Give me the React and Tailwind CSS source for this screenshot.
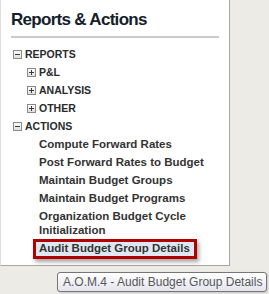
import React from 'react';

const reports = ['P&L', 'ANALYSIS', 'OTHER'];
const actions = [
  'Compute Forward Rates',
  'Post Forward Rates to Budget',
  'Maintain Budget Groups',
  'Maintain Budget Programs',
  'Organization Budget Cycle Initialization',
];

function ToggleBox({ open }) {
  return (
    <svg width="9" height="9" viewBox="0 0 9 9" className="shrink-0">
      <defs>
        <linearGradient id={open ? 'tg-o' : 'tg-c'} x1="0" y1="0" x2="0" y2="1">
          <stop offset="0" stopColor="#ffffff" />
          <stop offset="1" stopColor="#dcdcdc" />
        </linearGradient>
      </defs>
      <rect x="0.5" y="0.5" width="8" height="8" fill={`url(#${open ? 'tg-o' : 'tg-c'})`} stroke="#8a8a8a" />
      <line x1="2" y1="4.5" x2="7" y2="4.5" stroke="#3a3a3a" />
      {!open && <line x1="4.5" y1="2" x2="4.5" y2="7" stroke="#3a3a3a" />}
    </svg>
  );
}

function Header({ label, open }) {
  return (
    <div className="flex items-center h-[18px] leading-[18px]">
      <ToggleBox open={open} />
      <span className="ml-[3px] text-[10.5px] font-bold text-[#2a2a2a]">{label}</span>
    </div>
  );
}

export default function App() {
  return (
    <div className="relative h-[294px] w-[269px] overflow-hidden bg-[#ecebe6] font-['Liberation_Sans',Arial,sans-serif]">
      {/* Side panel */}
      <div className="h-[266px] w-[230px] bg-white border-l border-r border-b border-l-[#dedede] border-r-[#a6a6a6] border-b-[#a6a6a6]">
        <div className="ml-[10px] w-[208px] pt-[10px] pb-[6px] border-b-2 border-[#cacaca]">
          <h1 className="text-[17px] leading-[20px] font-bold tracking-[-0.7px] text-[#14212b]">Reports &amp; Actions</h1>
        </div>

        <div className="mt-[7px] ml-[12px]">
          <Header label="REPORTS" open />
          <div className="ml-[14px]">
            {reports.map((r) => (
              <Header key={r} label={r} />
            ))}
          </div>
          <Header label="ACTIONS" open />
          <ul className="ml-[26px] w-[178px] text-[11.5px] font-bold text-[#333333]">
            {actions.map((a) => (
              <li key={a} className="py-[2px] leading-[14px]">{a}</li>
            ))}
            <li>
              <span className="-ml-[6px] inline-block border-[3px] border-[#b10000] bg-[#dfe8f0] pl-[3px] pr-[4px] pb-[2px] leading-[12px] shadow-[2px_3px_4px_rgba(0,0,0,0.35)]">
                Audit Budget Group Details
              </span>
            </li>
          </ul>
        </div>
      </div>

      {/* Tooltip */}
      <div className="absolute left-[57px] top-[272px] h-[20px] w-[210px] rounded-[3px] border border-[#767676] bg-gradient-to-b from-white to-[#e4e5ee] pl-[5px] text-[12px] leading-[18px] text-[#575757] shadow-[1px_1px_2px_rgba(0,0,0,0.15)]">
        A.O.M.4 - Audit Budget Group Details
      </div>
    </div>
  );
}
